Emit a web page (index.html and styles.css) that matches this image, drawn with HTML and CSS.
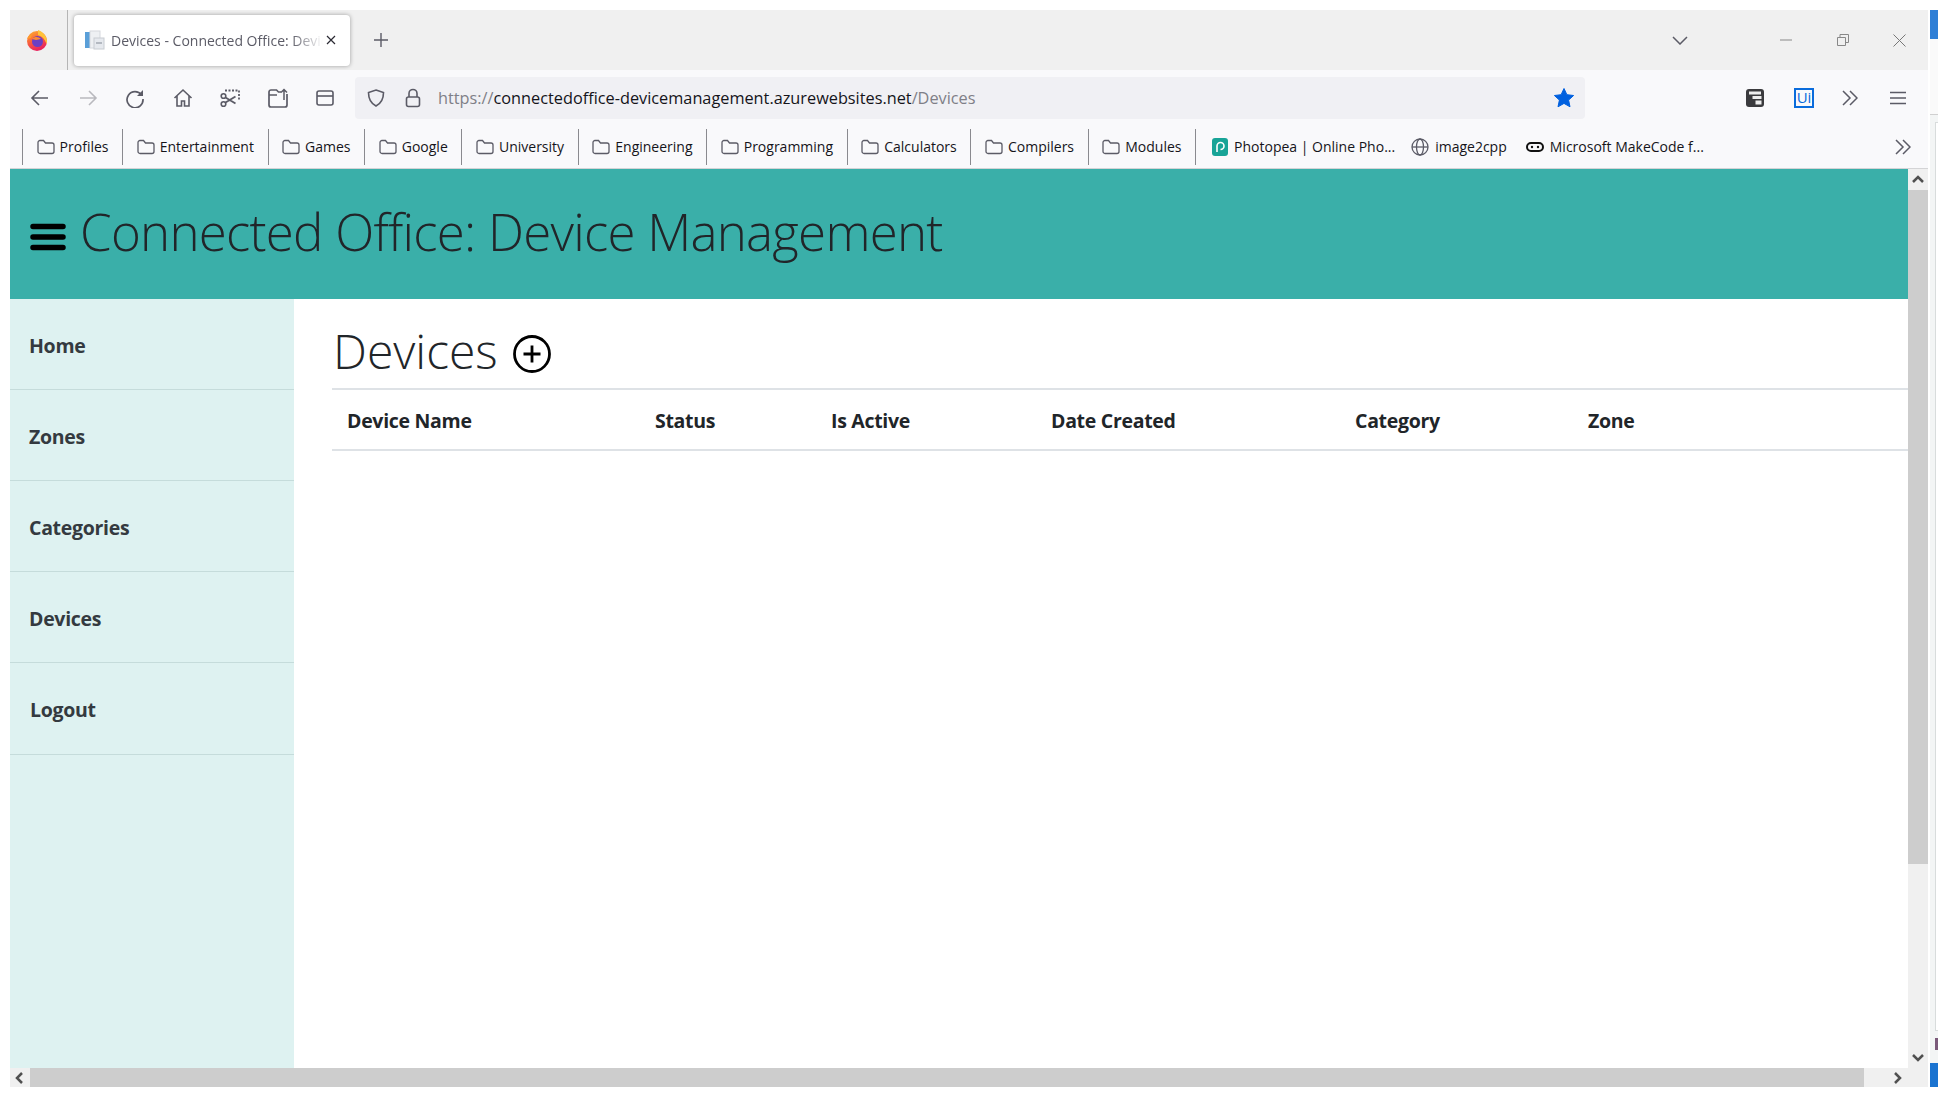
FILE: index.html
```html
<!DOCTYPE html>
<html lang="en">
<head>
  <meta charset="UTF-8">
  <title>Devices - Connected Office: Device Management</title>
  <link rel="stylesheet" href="styles.css">
</head>
<body>
  <svg class="defs" width="0" height="0">
    <symbol id="folder" viewBox="0 0 18 16">
      <path d="M1 3.500a2 2 0 0 1 2-2h3.500l2 2.500H15a2 2 0 0 1 2 2v6.500a2 2 0 0 1-2 2H3a2 2 0 0 1-2-2z" fill="none" stroke="#5b5b66" stroke-width="1.300"/>
    </symbol>
    <linearGradient id="flame" x1="0" y1="0" x2="0.4" y2="1">
      <stop offset="0" stop-color="#ffb52e"/>
      <stop offset="0.5" stop-color="#f9653a"/>
      <stop offset="1" stop-color="#e8245e"/>
    </linearGradient>
  </svg>
  <div class="window">
    <!-- Tabs -->
    <div class="tabstrip">
      <div class="ff-logo">
        <svg width="20" height="21" viewBox="0 0 20 21"><circle cx="10" cy="11" r="10" fill="url(#flame)"/><path d="M11 0c5 2 9 6 9 11 0 1-.2 2-.5 3C18 9 15 6 11 5z" fill="#ffc33a"/><path d="M0 9c1-3 3-4 5-5l-1 4z" fill="#ff9a2e"/><circle cx="10.500" cy="11.500" r="5.500" fill="#6a3fc4"/><path d="M5 9c3-3 7-2 9 0-2 0-3 1-5 1z" fill="#ff8a30"/></svg>
      </div>
      <div class="tab">
        <svg class="tab-icon" width="20" height="20" viewBox="0 0 20 20"><rect x="0" y="2" width="5" height="16" fill="#5a9fd8"/><rect x="5" y="1" width="10" height="17" fill="#eef0f3" stroke="#d5d8dd"/><rect x="9" y="8" width="10" height="11" fill="#e6e9ee" stroke="#c8ccd2"/><rect x="11" y="12" width="6" height="2" fill="#b4b9c1"/></svg>
        <span class="tab-title">Devices - Connected Office: Device Management</span>
        <svg class="tab-close" width="12" height="12" viewBox="0 0 12 12"><path d="M2 2l8 8M10 2l-8 8" stroke="#2b2a33" stroke-width="1.200"/></svg>
      </div>
      <svg class="new-tab" width="16" height="16" viewBox="0 0 16 16"><path d="M8 1v14M1 8h14" stroke="#5b5b66" stroke-width="1.400"/></svg>
      <div class="tab-spacer"></div>
      <svg class="tab-list" width="18" height="10" viewBox="0 0 18 10"><path d="M2 2l7 7 7-7" fill="none" stroke="#5b5b66" stroke-width="1.500"/></svg>
      <div class="winbtn"><svg width="12" height="12" viewBox="0 0 12 12"><path d="M0 6h12" stroke="#888" stroke-width="1"/></svg></div>
      <div class="winbtn"><svg width="12" height="12" viewBox="0 0 12 12"><path d="M.5 3.500h8v8h-8zM3 3.500V.5h8.500v8H8.500" fill="none" stroke="#888"/></svg></div>
      <div class="winbtn"><svg width="13" height="13" viewBox="0 0 13 13"><path d="M.5 .5l12 12M12.500 .5l-12 12" stroke="#777" stroke-width="1"/></svg></div>
    </div>

    <!-- Navigation -->
    <div class="navbar">
      <div class="nav-buttons">
        <svg width="20" height="20" viewBox="0 0 20 20"><path d="M18 10H2M9 3l-7 7 7 7" fill="none" stroke="#5b5b66" stroke-width="1.600"/></svg>
        <svg width="20" height="20" viewBox="0 0 20 20"><path d="M2 10h16M11 3l7 7-7 7" fill="none" stroke="#b9b9be" stroke-width="1.600"/></svg>
        <svg width="20" height="20" viewBox="0 0 20 20"><path d="M16.500 7A8 8 0 1 0 18 11" fill="none" stroke="#5b5b66" stroke-width="1.700"/><path d="M18 2v6h-6z" fill="#5b5b66"/></svg>
        <svg width="20" height="20" viewBox="0 0 20 20"><path d="M1.500 10L10 2l8.500 8M4 8v10h4.500v-5h3v5H16V8" fill="none" stroke="#5b5b66" stroke-width="1.600"/></svg>
        <svg width="20" height="20" viewBox="0 0 20 20"><path d="M5 2.500h14V13" fill="none" stroke="#5b5b66" stroke-width="1.800" stroke-dasharray="2 1.500"/><circle cx="3.500" cy="8" r="2.300" fill="none" stroke="#5b5b66" stroke-width="1.600"/><circle cx="3.500" cy="16" r="2.300" fill="none" stroke="#5b5b66" stroke-width="1.600"/><path d="M5.500 9.500l10 6M5.500 14.500l10-6" stroke="#5b5b66" stroke-width="1.800"/></svg>
        <svg width="20" height="20" viewBox="0 0 20 20"><path d="M13 4h-2.500L8.500 2H3a2 2 0 0 0-2 2v13a2 2 0 0 0 2 2h14a2 2 0 0 0 2-2V6M1 7h8" fill="none" stroke="#5b5b66" stroke-width="1.700"/><path d="M16 12V2M13 4.500L16 1.500l3 3" fill="none" stroke="#5b5b66" stroke-width="1.500"/></svg>
        <svg width="20" height="20" viewBox="0 0 20 20"><rect x="2" y="3" width="16" height="14" rx="2" fill="none" stroke="#5b5b66" stroke-width="1.600"/><path d="M2 8h16" stroke="#5b5b66" stroke-width="1.600"/></svg>
      </div>
      <div class="urlbar">
        <svg class="url-shield" width="20" height="20" viewBox="0 0 20 20"><path d="M10 2l7.500 2.500c0 7-2.500 11-7.500 13.500C5 15.500 2.500 11.500 2.500 4.500z" fill="none" stroke="#5b5b66" stroke-width="1.600"/></svg>
        <svg class="url-lock" width="16" height="20" viewBox="0 0 16 20"><rect x="1.500" y="9" width="13" height="9.500" rx="2" fill="none" stroke="#5b5b66" stroke-width="1.600"/><path d="M4 9V5.500a4 4 0 0 1 8 0V9" fill="none" stroke="#5b5b66" stroke-width="1.600"/></svg>
        <span class="url-text"><span class="url-dim">https://</span>connectedoffice-devicemanagement.azurewebsites.net<span class="url-dim">/Devices</span></span>
        <svg class="url-star" width="22" height="22" viewBox="0 0 22 22"><path d="M11 1.500l2.900 6.200 6.700.8-5 4.600 1.400 6.700-6-3.400-6 3.400 1.400-6.700-5-4.600 6.700-.8z" fill="#0060df" stroke="#0060df" stroke-linejoin="round"/></svg>
      </div>
      <div class="nav-right">
        <svg width="18" height="18" viewBox="0 0 18 18"><rect width="18" height="18" rx="3" fill="#3a3a3d"/><rect x="3" y="2.500" width="12" height="3" fill="#eee"/><rect x="6.500" y="7" width="9" height="3" fill="#eee"/><rect x="9.500" y="11.500" width="6" height="4" fill="#eee"/></svg>
        <div class="ui-badge">Ui</div>
        <svg width="16" height="16" viewBox="0 0 16 16"><path d="M1 1l7 7-7 7M8 1l7 7-7 7" fill="none" stroke="#5b5b66" stroke-width="1.500"/></svg>
        <svg class="menu-icon" width="16" height="14" viewBox="0 0 16 14"><path d="M0 1.500h16M0 7h16M0 12.500h16" stroke="#5b5b66" stroke-width="1.600"/></svg>
      </div>
    </div>

    <!-- Bookmarks -->
    <div class="bookmarks">
      <div class="bm-folder"><svg width="18" height="16"><use href="#folder"/></svg>Profiles</div>
      <div class="bm-folder"><svg width="18" height="16"><use href="#folder"/></svg>Entertainment</div>
      <div class="bm-folder"><svg width="18" height="16"><use href="#folder"/></svg>Games</div>
      <div class="bm-folder"><svg width="18" height="16"><use href="#folder"/></svg>Google</div>
      <div class="bm-folder"><svg width="18" height="16"><use href="#folder"/></svg>University</div>
      <div class="bm-folder"><svg width="18" height="16"><use href="#folder"/></svg>Engineering</div>
      <div class="bm-folder"><svg width="18" height="16"><use href="#folder"/></svg>Programming</div>
      <div class="bm-folder"><svg width="18" height="16"><use href="#folder"/></svg>Calculators</div>
      <div class="bm-folder"><svg width="18" height="16"><use href="#folder"/></svg>Compilers</div>
      <div class="bm-folder bm-last"><svg width="18" height="16"><use href="#folder"/></svg>Modules</div>
      <div class="bm-link">
        <svg width="16" height="18" viewBox="0 0 16 18"><rect width="16" height="18" rx="3" fill="#18a497"/><path d="M5 14V8a3.500 3.500 0 1 1 3.500 3.500" fill="none" stroke="#fff" stroke-width="1.600"/></svg>
        Photopea | Online Pho...
      </div>
      <div class="bm-link">
        <svg width="18" height="18" viewBox="0 0 18 18"><circle cx="9" cy="9" r="8" fill="none" stroke="#5b5b66" stroke-width="1.300"/><ellipse cx="9" cy="9" rx="3.500" ry="8" fill="none" stroke="#5b5b66" stroke-width="1.300"/><path d="M1 9h16" stroke="#5b5b66" stroke-width="1.300"/></svg>
        image2cpp
      </div>
      <div class="bm-link bm-make">
        <svg width="18" height="10" viewBox="0 0 18 10"><rect x="1" y="1" width="16" height="8" rx="4" fill="none" stroke="#111" stroke-width="2"/><circle cx="6" cy="5" r="1.200" fill="#111"/><circle cx="12" cy="5" r="1.200" fill="#111"/></svg>
        Microsoft MakeCode f...
      </div>
      <svg class="bm-more" width="16" height="16" viewBox="0 0 16 16"><path d="M1 1l7 7-7 7M8 1l7 7-7 7" fill="none" stroke="#5b5b66" stroke-width="1.500"/></svg>
    </div>

    <!-- Page -->
    <div class="viewport">
      <div class="page-row">
        <div class="page">
          <header class="site-header">
            <svg class="burger" width="36" height="28" viewBox="0 0 36 28"><path d="M3 3.500h30M3 14h30M3 24.500h30" stroke="#000" stroke-width="5.500" stroke-linecap="round"/></svg>
            <h1>Connected Office: Device Management</h1>
          </header>
          <div class="page-body">
            <nav class="sidebar">
              <a>Home</a>
              <a>Zones</a>
              <a>Categories</a>
              <a>Devices</a>
              <a class="logout">Logout</a>
            </nav>
            <main class="content">
              <div class="heading">
                <h2>Devices</h2>
                <svg width="38" height="38" viewBox="0 0 38 38"><circle cx="19" cy="19" r="17.500" fill="none" stroke="#000" stroke-width="2.800"/><path d="M19 10.500v17M10.500 19h17" stroke="#000" stroke-width="2.800"/></svg>
              </div>
              <table class="table">
                <thead>
                  <tr>
                    <th class="c-name">Device Name</th>
                    <th class="c-status">Status</th>
                    <th class="c-active">Is Active</th>
                    <th class="c-date">Date Created</th>
                    <th class="c-cat">Category</th>
                    <th>Zone</th>
                  </tr>
                </thead>
              </table>
            </main>
          </div>
        </div>
        <div class="vscroll">
          <svg width="12" height="8" viewBox="0 0 12 8"><path d="M1 7l5-5 5 5" fill="none" stroke="#505050" stroke-width="2.500"/></svg>
          <div class="vthumb"></div>
          <svg width="12" height="8" viewBox="0 0 12 8"><path d="M1 1l5 5 5-5" fill="none" stroke="#505050" stroke-width="2.500"/></svg>
        </div>
      </div>
      <div class="hscroll">
        <svg class="h-left" width="8" height="12" viewBox="0 0 8 12"><path d="M7 1L2 6l5 5" fill="none" stroke="#505050" stroke-width="2.500"/></svg>
        <div class="hthumb"></div>
        <svg class="h-right" width="8" height="12" viewBox="0 0 8 12"><path d="M1 1l5 5-5 5" fill="none" stroke="#505050" stroke-width="2.500"/></svg>
      </div>
    </div>
  </div>

  <!-- Nachbarfenster am rechten Rand -->
  <div class="edge">
    <div class="edge-top"></div>
    <div class="edge-tool"></div>
    <div class="edge-doc">
      <div class="edge-box"></div>
      <div class="edge-mark"></div>
    </div>
    <div class="edge-bottom"></div>
  </div>
</body>
</html>
```

FILE: styles.css
```css
/* Allgemein */
html, body {
  height: 100%;
}
body {
  margin: 0;
  padding: 10px 0 11px 10px;
  box-sizing: border-box;
  display: flex;
  background: #fff;
  font-family: 'Open Sans', 'Noto Sans', sans-serif;
  color: #212529;
  overflow: hidden;
}
.defs {
  position: absolute;
}
.window {
  width: 1918px;
  display: flex;
  flex-direction: column;
  flex-shrink: 0;
}

/* Tabs */
.tabstrip {
  height: 60px;
  background: #f0f0f0;
  display: flex;
  align-items: center;
  flex-shrink: 0;
}
.ff-logo {
  width: 58px;
  height: 60px;
  padding-right: 3px;
  display: flex;
  justify-content: center;
  align-items: center;
  border-right: 1px solid #b5b5b5;
  box-sizing: border-box;
}
.tab {
  width: 276px;
  height: 51px;
  margin-left: 6px;
  background: #fff;
  border-radius: 4px;
  box-shadow: 0 0 4px rgba(0, 0, 0, 0.35);
  display: flex;
  align-items: center;
  box-sizing: border-box;
  padding: 0 13px 0 11px;
  font-size: 14px;
  color: #5b5b66;
}
.tab-icon {
  flex-shrink: 0;
}
.tab-title {
  margin-left: 6px;
  white-space: nowrap;
  overflow: hidden;
  flex: 1;
  -webkit-mask-image: linear-gradient(to right, #000 85%, transparent);
  mask-image: linear-gradient(to right, #000 85%, transparent);
}
.tab-close {
  margin-left: 2px;
  flex-shrink: 0;
}
.new-tab {
  margin-left: 23px;
}
.tab-spacer {
  flex: 1;
}
.tab-list {
  margin-right: 68px;
}
.winbtn {
  width: 57px;
  display: flex;
  justify-content: center;
}

/* Navigation */
.navbar {
  height: 55px;
  background: #f9f9fb;
  display: flex;
  align-items: center;
  flex-shrink: 0;
}
.nav-buttons {
  display: flex;
  gap: 27.5px;
  padding-left: 20px;
  width: 345px;
  box-sizing: border-box;
}
.urlbar {
  width: 1230px;
  height: 42px;
  background: #f0f0f4;
  border-radius: 4px;
  display: flex;
  align-items: center;
  padding: 0 10px 0 11px;
  box-sizing: border-box;
  font-size: 16.3px;
  color: #15141a;
}
.url-shield {
  margin-right: 19px;
}
.url-lock {
  margin-right: 17px;
}
.url-text {
  flex: 1;
  white-space: nowrap;
}
.url-dim {
  color: #7f7f87;
}
.nav-right {
  display: flex;
  align-items: center;
  margin-left: 161px;
  gap: 28px;
}
.ui-badge {
  width: 20px;
  height: 20px;
  margin-left: 2px;
  box-sizing: border-box;
  border: 2px solid #0a6cdc;
  color: #0a6cdc;
  font-size: 15px;
  line-height: 15px;
  text-align: center;
}
.menu-icon {
  margin-left: 4px;
}

/* Lesezeichen */
.bookmarks {
  height: 44px;
  background: #f9f9fb;
  border-bottom: 1px solid #d4d4d6;
  box-sizing: border-box;
  display: flex;
  align-items: center;
  font-size: 14px;
  color: #15141a;
  padding-left: 12px;
  flex-shrink: 0;
}
.bm-folder {
  height: 36px;
  border-left: 1px solid #8a8a8f;
  padding: 0 13.6px;
  display: flex;
  align-items: center;
  gap: 5px;
  white-space: nowrap;
}
.bm-last {
  border-right: 1px solid #8a8a8f;
}
.bm-link {
  display: flex;
  align-items: center;
  gap: 6px;
  margin-left: 16px;
  white-space: nowrap;
}
.bm-make {
  margin-left: 19px;
}
.bm-more {
  margin-left: auto;
  margin-right: 17px;
}

/* Seite */
.viewport {
  flex: 1;
  display: flex;
  flex-direction: column;
  min-height: 0;
}
.page-row {
  flex: 1;
  display: flex;
  min-height: 0;
}
.page {
  flex: 1;
  display: flex;
  flex-direction: column;
  background: #fff;
}
.site-header {
  height: 130px;
  background: #3aafa9;
  display: flex;
  align-items: center;
  padding: 0 0 7px 20px;
  box-sizing: border-box;
  gap: 14px;
  flex-shrink: 0;
}
.site-header h1 {
  margin: 0;
  font-size: 51px;
  font-weight: 300;
  letter-spacing: -0.75px;
  white-space: nowrap;
  color: #212529;
}
.burger {
  margin-top: 13px;
}
.page-body {
  flex: 1;
  display: flex;
}
.sidebar {
  width: 284px;
  background: #def2f1;
  display: flex;
  flex-direction: column;
  flex-shrink: 0;
}
.sidebar a {
  height: 88px;
  padding: 2px 0 0 19px;
  display: flex;
  align-items: center;
  font-size: 19.5px;
  font-weight: 700;
  letter-spacing: -0.3px;
  color: #343a40;
  border-bottom: 1px solid #c5dcdb;
}
.sidebar .logout {
  height: 89px;
  padding-left: 20px;
}
.content {
  flex: 1;
  padding-left: 38px;
}
.heading {
  height: 89px;
  display: flex;
  align-items: center;
  gap: 15px;
  padding: 14px 0 0 1px;
  box-sizing: border-box;
}
.heading h2 {
  margin: 0;
  font-size: 48px;
  font-weight: 300;
}
.heading svg {
  margin-top: 6px;
}
.table {
  width: 100%;
  border-collapse: collapse;
  border-top: 2px solid #dee2e6;
  border-bottom: 2px solid #dee2e6;
}
.table th {
  height: 61px;
  padding: 2px 0 0 15px;
  text-align: left;
  font-size: 19.5px;
  font-weight: 700;
  letter-spacing: -0.3px;
  color: #212529;
  box-sizing: border-box;
}
.c-name { width: 308px; }
.c-status { width: 176px; }
.c-active { width: 220px; }
.c-date { width: 304px; }
.c-cat { width: 233px; }

/* Scrollbalken */
.vscroll {
  width: 20px;
  background: #f0f0f0;
  display: flex;
  flex-direction: column;
  align-items: center;
  flex-shrink: 0;
}
.vscroll svg {
  margin: 6px 0;
}
.vthumb {
  width: 100%;
  height: 674px;
  background: #cdcdcd;
  margin-bottom: auto;
  margin-top: 1px;
}
.hscroll {
  height: 19px;
  background: #f0f0f0;
  display: flex;
  align-items: center;
  padding-right: 20px;
  flex-shrink: 0;
}
.h-left {
  margin: 0 7px 0 5px;
}
.h-right {
  margin: 0 6px;
}
.hthumb {
  width: 1834px;
  height: 100%;
  background: #cdcdcd;
  margin-right: auto;
}

/* Rand rechts */
.edge {
  width: 8px;
  margin-left: 2px;
  display: flex;
  flex-direction: column;
  flex-shrink: 0;
}
.edge-top {
  height: 29px;
  background: #2f7fd6;
}
.edge-tool {
  height: 75px;
  background: #fafafa;
  border-bottom: 1px solid #d0d0d0;
}
.edge-doc {
  flex: 1;
  background: #f3f5f5;
  padding: 7px 0 0 5px;
  display: flex;
  flex-direction: column;
  min-height: 0;
}
.edge-box {
  flex: 1;
  background: #fff;
  border: 1px solid #d8dcdc;
  border-right: none;
}
.edge-mark {
  width: 3px;
  height: 12px;
  margin: 7px 0 13px;
  background: #7b5a7a;
}
.edge-bottom {
  height: 24px;
  background: #1a73d0;
}
```
